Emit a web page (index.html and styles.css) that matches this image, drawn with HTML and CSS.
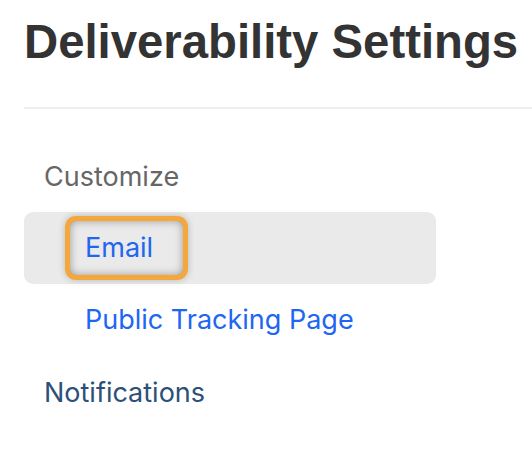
FILE: index.html
```html
<!DOCTYPE html>
<html>
<head>
<meta charset="utf-8">
<link rel="stylesheet" href="styles.css">
</head>
<body>
<div class="page">
  <h1 class="title">Deliverability Settings</h1>
  <hr class="divider">
  <nav class="nav">
    <div class="nav-group">Customize</div>
    <div class="nav-item active"><a class="nav-link focused" href="#">Email</a></div>
    <div class="nav-item"><a class="nav-link" href="#">Public Tracking Page</a></div>
    <div class="nav-group notif">Notifications</div>
  </nav>
</div>
</body>
</html>
```
FILE: styles.css
```css
html, body {
  margin: 0;
  padding: 0;
  background: #ffffff;
}
.page {
  padding: 14px 0 0 24px;
}
.title {
  margin: 0;
  font-family: "Liberation Sans", Arial, sans-serif;
  font-weight: 700;
  font-size: 47.3px;
  line-height: 56px;
  color: #333333;
  white-space: nowrap;
}
.divider {
  margin: 37px 0 0 0;
  border: 0;
  height: 2px;
  background: #eeeeee;
}
.nav {
  margin-top: 31px;
  width: 412px;
  font-family: Inter, "Noto Sans", sans-serif;
  font-size: 27px;
}
.nav-group {
  height: 72px;
  display: flex;
  align-items: center;
  padding-left: 20px;
  color: #666666;
}
.nav-group.notif {
  color: #2d5078;
}
.nav-item {
  height: 72px;
  display: flex;
  align-items: center;
  padding-left: 46px;
  border-radius: 9px;
}
.nav-item.active {
  background: #eaeaea;
}
.nav-link {
  display: block;
  color: #2066f2;
  text-decoration: none;
  line-height: 54px;
  padding: 0 15px;
  border-radius: 6px;
}
.nav-link.focused {
  padding-right: 30px;
  box-shadow: 0 0 0 5px #f3a73c, 0 0 7px 5px rgba(0, 0, 0, 0.22), inset 0 0 8px rgba(0, 0, 0, 0.35);
}
```
